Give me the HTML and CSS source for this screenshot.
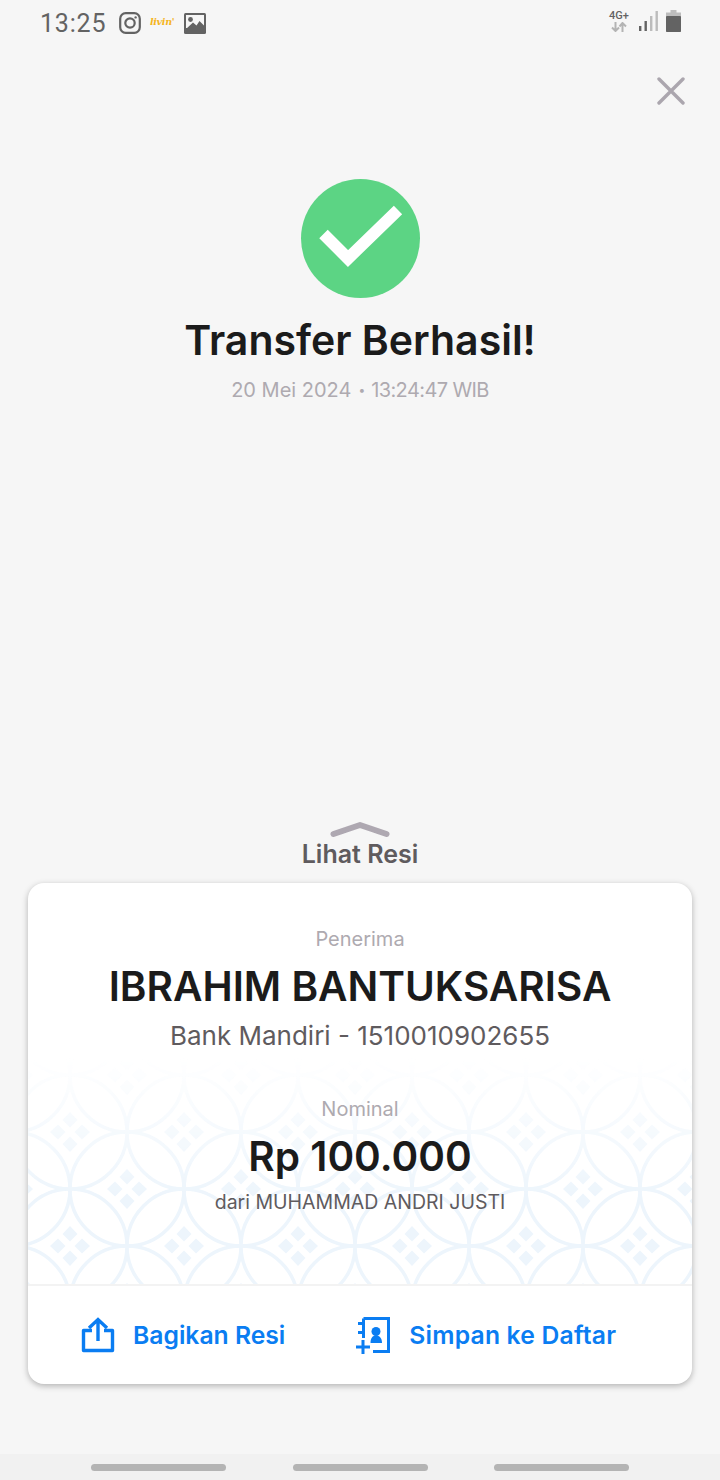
FILE: index.html
```html
<!DOCTYPE html>
<html lang="en">
<head>
    <meta charset="UTF-8">
    <meta name="viewport" content="width=device-width, initial-scale=1.0">
    <title>Transfer Berhasil</title>
    <link rel="stylesheet" href="styles.css">
</head>
<body>
    <div class="screen">
        <!-- status bar -->
        <div class="status">
            <div class="status-left">
                <span class="clock">13:25</span>
                <svg width="22" height="22" viewBox="0 0 22 22" fill="none" stroke="#636363" stroke-width="2.2">
                    <rect x="1.2" y="1.2" width="19.6" height="19.6" rx="5.5"/>
                    <circle cx="11" cy="11" r="4.7"/>
                    <circle cx="16.6" cy="5.4" r="1.2" fill="#636363" stroke="none"/>
                </svg>
                <span class="livin">livin'</span>
                <svg width="22" height="21" viewBox="0 0 22 21">
                    <rect width="22" height="21" rx="1.5" fill="#636363"/>
                    <rect x="2" y="2" width="18" height="13" fill="#f6f6f6"/>
                    <circle cx="6.5" cy="6.5" r="2.4" fill="#636363"/>
                    <path d="M2 16 L9 9.5 L12.5 12.5 L15.5 8 L20 12.5 V16 Z" fill="#636363"/>
                </svg>
            </div>
            <div class="status-right">
                <div class="net">
                    <span class="net-label">4G+</span>
                    <svg width="16" height="10" viewBox="0 0 16 10" fill="none" stroke="#b4b4b4" stroke-width="2">
                        <path d="M4.500 0V9M1 5.500L4.500 9L8 5.500"/>
                        <path d="M11.500 10V1M8.500 4.500L11.500 1L15 4.500"/>
                    </svg>
                </div>
                <svg width="20" height="21" viewBox="0 0 20 21">
                    <rect x="0" y="16" width="2.400" height="5" fill="#636363"/>
                    <rect x="5.500" y="11" width="2.400" height="10" fill="#636363"/>
                    <rect x="11" y="6" width="2.400" height="15" fill="#bcbcbc"/>
                    <rect x="16.500" y="1" width="2.400" height="20" fill="#bcbcbc"/>
                </svg>
                <svg width="15" height="22" viewBox="0 0 15 22">
                    <path d="M4.500 0H10.500V2.500H15V22H0V2.500H4.500Z" fill="#bdbdbd"/>
                    <rect y="6" width="15" height="16" rx="1" fill="#636363"/>
                </svg>
            </div>
        </div>

        <div class="close-row">
            <svg width="28" height="28" viewBox="0 0 28 28" stroke="#aba6ae" stroke-width="3.400" stroke-linecap="round">
                <path d="M2 2L26 26M26 2L2 26"/>
            </svg>
        </div>

        <!-- result -->
        <div class="result">
            <svg class="check" width="119" height="119" viewBox="0 0 119 119">
                <circle cx="59.500" cy="59.500" r="59.500" fill="#5cd484"/>
                <path d="M22.500 55 L47 79.500 L97 31" fill="none" stroke="#fff" stroke-width="12"/>
            </svg>
            <h1 class="title">Transfer Berhasil!</h1>
            <p class="date">20 Mei 2024<span class="dot">•</span><span class="time">13:24:47 WIB</span></p>
        </div>

        <!-- receipt handle -->
        <div class="handle">
            <svg width="60" height="17" viewBox="0 0 60 17" fill="none" stroke="#aea8b1" stroke-width="6" stroke-linecap="round" stroke-linejoin="round">
                <path d="M3.500 13L30 4L56.500 13"/>
            </svg>
            <span class="handle-label">Lihat Resi</span>
        </div>

        <!-- card -->
        <div class="card">
            <div class="card-body">
                <svg class="batik" width="664" height="226">
                    <defs>
                        <pattern id="kawung" width="114" height="114" x="-15" y="17" patternUnits="userSpaceOnUse">
                            <g fill="none" stroke="#edf5fc" stroke-width="3.500">
                                <circle cx="0" cy="0" r="57"/>
                                <circle cx="114" cy="0" r="57"/>
                                <circle cx="0" cy="114" r="57"/>
                                <circle cx="114" cy="114" r="57"/>
                                <circle cx="57" cy="57" r="57"/>
                            </g>
                            <g fill="#edf5fc">
                                <path d="M57 37L64.500 45L57 52.500L49.500 45Z"/>
                                <path d="M57 61.500L64.500 69L57 77L49.500 69Z"/>
                                <path d="M45 49.500L52.500 57L45 64.500L37 57Z"/>
                                <path d="M69 49.500L77 57L69 64.500L61.500 57Z"/>
                                <path d="M0 4.500L7.500 12L0 20L-7.500 12Z"/>
                                <path d="M114 4.500L121.500 12L114 20L106.500 12Z"/>
                                <path d="M12 -7.500L20 0L12 7.500L4.500 0Z"/>
                                <path d="M102 -7.500L109.500 0L102 7.500L94 0Z"/>
                                <path d="M12 106.500L20 114L12 121.500L4.500 114Z"/>
                                <path d="M102 106.500L109.500 114L102 121.500L94 114Z"/>
                                <path d="M0 94L7.500 102L0 109.500L-7.500 102Z"/>
                                <path d="M114 94L121.500 102L114 109.500L106.500 102Z"/>
                            </g>
                        </pattern>
                        <linearGradient id="black-fade" x1="0" y1="0" x2="0" y2="1">
                            <stop offset="0" stop-color="#000"/>
                            <stop offset="1" stop-color="#000" stop-opacity="0"/>
                        </linearGradient>
                        <mask id="fade-mask">
                            <rect width="664" height="226" fill="#fff"/>
                            <rect width="664" height="140" fill="url(#black-fade)"/>
                        </mask>
                    </defs>
                    <rect width="664" height="226" fill="url(#kawung)" mask="url(#fade-mask)"/>
                </svg>
                <div class="label label-first">Penerima</div>
                <div class="name">IBRAHIM BANTUKSARISA</div>
                <div class="account">Bank Mandiri - 1510010902655</div>
                <div class="label label-second">Nominal</div>
                <div class="amount">Rp 100.000</div>
                <div class="sender">dari MUHAMMAD ANDRI JUSTI</div>
            </div>
            <div class="actions">
                <div class="action">
                    <svg width="34" height="36" viewBox="0 0 34 36" fill="none" stroke="#0a7df2" stroke-width="3.400">
                        <path d="M11 13.500H2.500V33.500H31.500V13.500H23" stroke-linejoin="round"/>
                        <path d="M17 24V3M8 11L17 2.500L26 11"/>
                    </svg>
                    <span>Bagikan Resi</span>
                </div>
                <div class="action action-save">
                    <svg width="34" height="37" viewBox="0 0 34 37" fill="none" stroke="#0a7df2" stroke-width="3">
                        <path d="M7.500 1.500H32.500V34.500H17M7.500 1.500V21"/>
                        <path d="M2 6.500H7.500M2 15.500H7.500"/>
                        <path d="M0 30H14M7 23V37"/>
                        <circle cx="20" cy="14.500" r="4.500" fill="#0a7df2" stroke="none"/>
                        <path d="M14.500 26C14.500 21 16.500 18.500 20 18.500C23.500 18.500 26 21 26 26Z" fill="#0a7df2" stroke="none"/>
                    </svg>
                    <span>Simpan ke Daftar</span>
                </div>
            </div>
        </div>

        <!-- nav bar -->
        <div class="navbar">
            <span class="pill"></span>
            <span class="pill"></span>
            <span class="pill"></span>
        </div>
    </div>
</body>
</html>
```

FILE: styles.css
```css
* {
    box-sizing: border-box;
}
html, body {
    margin: 0;
    padding: 0;
}
body {
    font-family: Inter, "Noto Sans", sans-serif;
    background: #f6f6f6;
}
.screen {
    width: 720px;
    height: 1480px;
    display: flex;
    flex-direction: column;
    overflow: hidden;
}

.status {
    height: 45px;
    padding: 10px 39px 0 40px;
    display: flex;
    justify-content: space-between;
    align-items: flex-start;
}
.status-left {
    display: flex;
    align-items: center;
    height: 26px;
}
.clock {
    font-family: Roboto, sans-serif;
    font-size: 25px;
    color: #636363;
    letter-spacing: 0.8px;
    width: 79px;
}
.livin {
    width: 25px;
    margin: 0 9px 4px 9px;
    font-family: "DejaVu Serif", serif;
    font-style: italic;
    font-weight: bold;
    font-size: 9.5px;
    letter-spacing: -0.3px;
    color: #f5b51e;
}
.status-right {
    display: flex;
    align-items: flex-start;
    gap: 7px;
}
.net {
    display: flex;
    flex-direction: column;
    align-items: center;
    width: 24px;
    margin-right: 1px;
}
.net-label {
    font-family: Roboto, sans-serif;
    font-size: 11px;
    font-weight: 500;
    line-height: 12px;
    color: #636363;
}

.close-row {
    display: flex;
    justify-content: flex-end;
    padding: 32px 35px 0 0;
}

.result {
    display: flex;
    flex-direction: column;
    align-items: center;
    padding-top: 74px;
}
.check {
    display: block;
}
.title {
    margin: 18px 0 0;
    font-size: 41px;
    line-height: 48px;
    font-weight: 600;
    color: #1b1b1b;
}
.date {
    margin: 13px 0 0;
    font-size: 20px;
    line-height: 26px;
    color: #aeaab0;
}
.dot {
    font-size: 12px;
    margin: 0 6px 0 7px;
    vertical-align: 3px;
}
.time {
    letter-spacing: -0.6px;
}

.handle {
    margin-top: auto;
    display: flex;
    flex-direction: column;
    align-items: center;
    height: 62px;
}
.handle-label {
    font-size: 25px;
    line-height: 32px;
    font-weight: 600;
    color: #5f5b5e;
}

.card {
    margin: 0 28px 70px;
    height: 501px;
    background: #fff;
    border-radius: 16px;
    box-shadow: 0 2px 6px rgba(0, 0, 0, 0.28);
    overflow: hidden;
}
.card-body {
    position: relative;
    height: 403px;
    border-bottom: 2px solid #f3f3f3;
    display: flex;
    flex-direction: column;
    align-items: center;
}
.card-body > div {
    position: relative;
}
.batik {
    position: absolute;
    left: 0;
    bottom: 0;
}
.label {
    font-size: 20px;
    line-height: 26px;
    color: #aeaab0;
}
.label-first {
    margin-top: 43px;
}
.label-second {
    margin-top: 43px;
}
.name {
    margin-top: 9px;
    font-size: 40.5px;
    line-height: 52px;
    font-weight: 600;
    color: #1b1b1b;
}
.account {
    margin-top: 6px;
    font-size: 26px;
    line-height: 34px;
    color: #5f5b5e;
}
.amount {
    margin-top: 10px;
    font-size: 40.5px;
    line-height: 50px;
    font-weight: 600;
    color: #1b1b1b;
}
.sender {
    margin-top: 7px;
    font-size: 19.5px;
    line-height: 26px;
    color: #5f5b5e;
}

.actions {
    height: 98px;
    display: flex;
    align-items: center;
    padding-left: 53px;
}
.action {
    display: flex;
    align-items: center;
    gap: 18px;
    font-size: 24.7px;
    font-weight: 600;
    color: #0a7df2;
}
.action-save {
    margin-left: 71px;
    gap: 19px;
    letter-spacing: 0.2px;
}

.navbar {
    height: 26px;
    background: #f1f1f1;
    display: flex;
    justify-content: space-between;
    align-items: center;
    padding: 0 91px;
}
.pill {
    width: 135px;
    height: 7px;
    border-radius: 4px;
    background: #b4b4b4;
}
```
